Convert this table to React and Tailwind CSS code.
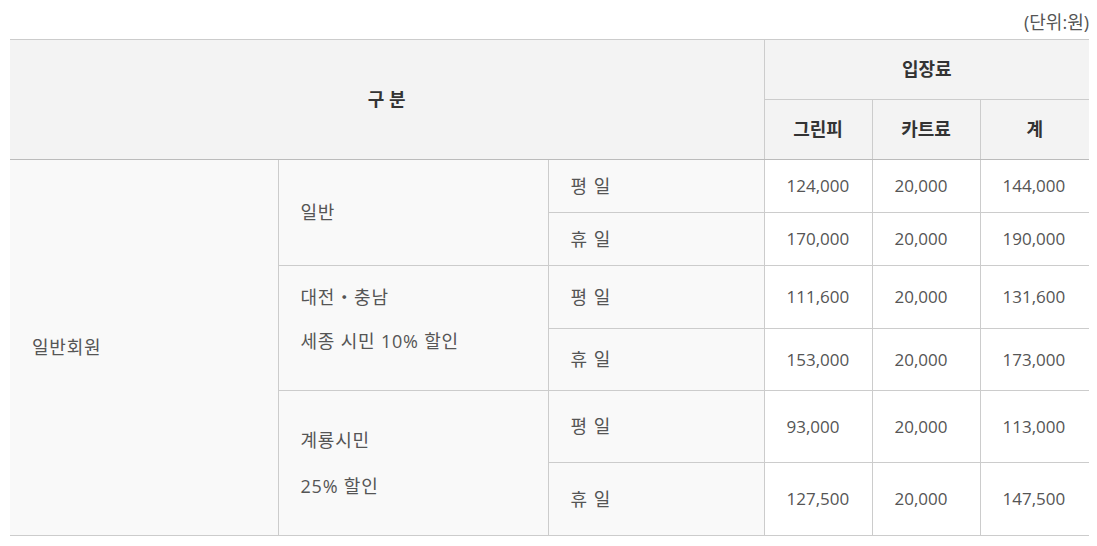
export default function App() {
  const cell = "border border-[#cccccc] pl-[22px] text-left align-middle";
  const ko = " text-[18px] tracking-[0.8px]";
  const th = "border border-[#cccccc] bg-[#f3f3f3] text-center font-bold text-[#333] text-[18px]";
  const rows = [
    { group: ["일반"], days: [["평 일", "124,000", "20,000", "144,000", 53], ["휴 일", "170,000", "20,000", "190,000", 53]] },
    { group: ["대전・충남", "세종 시민 10% 할인"], days: [["평 일", "111,600", "20,000", "131,600", 63], ["휴 일", "153,000", "20,000", "173,000", 62]] },
    { group: ["계룡시민", "25% 할인"], days: [["평 일", "93,000", "20,000", "113,000", 72], ["휴 일", "127,500", "20,000", "147,500", 73]] },
  ];

  return (
    <div className="bg-white w-[1097px] h-[546px] pl-[10px] pr-[8px] text-[17px] text-[#555] font-['Open_Sans','Noto_Sans_CJK_KR',sans-serif]">
      <div className="h-[39px] flex items-center justify-end pt-[6px] text-[18px]">(단위:원)</div>
      <table className="w-[1079px] border-collapse table-fixed">
        <colgroup>
          <col className="w-[268px]" />
          <col className="w-[270px]" />
          <col className="w-[216px]" />
          <col className="w-[108px]" />
          <col className="w-[108px]" />
          <col className="w-[109px]" />
        </colgroup>
        <thead>
          <tr className="h-[60px]">
            <th colSpan={3} rowSpan={2} className={th + " border-l-0 border-b-[#bbbbbb]"}>
              구 분
            </th>
            <th colSpan={3} className={th + " border-r-0"}>
              입장료
            </th>
          </tr>
          <tr className="h-[60px]">
            <th className={th + " border-b-[#bbbbbb]"}>그린피</th>
            <th className={th + " border-b-[#bbbbbb]"}>카트료</th>
            <th className={th + " border-r-0 border-b-[#bbbbbb]"}>계</th>
          </tr>
        </thead>
        <tbody>
          {rows.map((r, gi) =>
            r.days.map((d, di) => (
              <tr key={gi + "-" + di} style={{ height: d[4] }}>
                {gi === 0 && di === 0 && (
                  <td rowSpan={6} className={cell + " bg-[#f9f9f9] border-l-0" + ko}>
                    일반회원
                  </td>
                )}
                {di === 0 && (
                  <td rowSpan={2} className={cell + " bg-[#f9f9f9]" + ko}>
                    {r.group.length === 1 ? (
                      r.group[0]
                    ) : (
                      <div className={gi === 1 ? "flex flex-col gap-[18px] pb-[18px]" : "flex flex-col gap-[20px]"}>
                        {r.group.map((t) => (
                          <span key={t} className="leading-[26px]">{t}</span>
                        ))}
                      </div>
                    )}
                  </td>
                )}
                <td className={cell + " bg-[#f9f9f9] text-[18px] tracking-[1px]"}>{d[0].replace(" ", "\u00a0")}</td>
                <td className={cell}>{d[1]}</td>
                <td className={cell}>{d[2]}</td>
                <td className={cell + " border-r-0"}>{d[3]}</td>
              </tr>
            ))
          )}
        </tbody>
      </table>
    </div>
  );
}
